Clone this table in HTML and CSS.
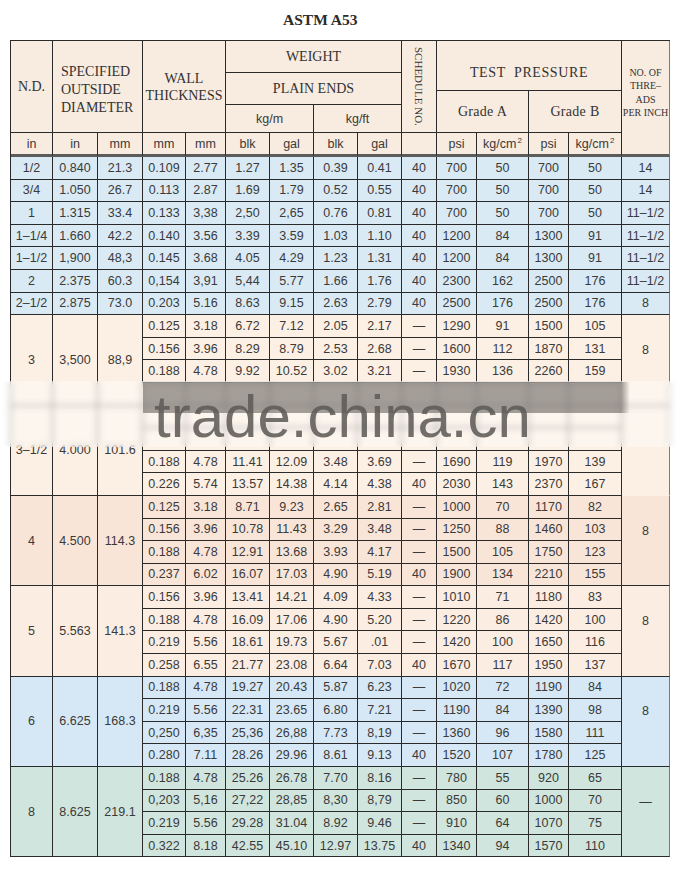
FILE: index.html
```html
<!DOCTYPE html>
<html>
<head>
<meta charset="utf-8">
<link rel="stylesheet" href="styles.css">
</head>
<body>
<div class="page">
  <div class="title">ASTM A53</div>
  <div class="tbl">
    <div class="cell h nd">N.D.</div>
    <div class="cell h sod"><div>SPECIFIED<br>OUTSIDE<br>DIAMETER</div></div>
    <div class="cell h wall"><div>WALL<br>THICKNESS</div></div>
    <div class="cell h wt">WEIGHT</div>
    <div class="cell h pe">PLAIN ENDS</div>
    <div class="cell hs kgm">kg/m</div>
    <div class="cell hs kgf">kg/ft</div>
    <div class="cell h sch"><span class="vert">SCHEDULE NO.</span></div>
    <div class="cell h tp">TEST&nbsp; PRESSURE</div>
    <div class="cell h ga">Grade A</div>
    <div class="cell h gb">Grade B</div>
    <div class="cell h thr"><div>NO. OF<br>THRE–<br>ADS<br>PER INCH</div></div>

    <div class="grp u">
      <div>in</div><div>in</div><div>mm</div><div>mm</div><div>mm</div><div>blk</div><div>gal</div><div>blk</div><div>gal</div><div></div><div>psi</div><div>kg/cm<span class="sup">2</span></div><div>psi</div><div>kg/cm<span class="sup">2</span></div>
    </div>

    <div class="grp b"><div>1/2</div><div>0.840</div><div>21.3</div><div>0.109</div><div>2.77</div><div>1.27</div><div>1.35</div><div>0.39</div><div>0.41</div><div>40</div><div>700</div><div>50</div><div>700</div><div>50</div><div>14</div></div>
    <div class="grp b"><div>3/4</div><div>1.050</div><div>26.7</div><div>0.113</div><div>2.87</div><div>1.69</div><div>1.79</div><div>0.52</div><div>0.55</div><div>40</div><div>700</div><div>50</div><div>700</div><div>50</div><div>14</div></div>
    <div class="grp b"><div>1</div><div>1.315</div><div>33.4</div><div>0.133</div><div>3,38</div><div>2,50</div><div>2,65</div><div>0.76</div><div>0.81</div><div>40</div><div>700</div><div>50</div><div>700</div><div>50</div><div>11–1/2</div></div>
    <div class="grp b"><div>1–1/4</div><div>1.660</div><div>42.2</div><div>0.140</div><div>3.56</div><div>3.39</div><div>3.59</div><div>1.03</div><div>1.10</div><div>40</div><div>1200</div><div>84</div><div>1300</div><div>91</div><div>11–1/2</div></div>
    <div class="grp b"><div>1–1/2</div><div>1,900</div><div>48,3</div><div>0.145</div><div>3.68</div><div>4.05</div><div>4.29</div><div>1.23</div><div>1.31</div><div>40</div><div>1200</div><div>84</div><div>1300</div><div>91</div><div>11–1/2</div></div>
    <div class="grp b"><div>2</div><div>2.375</div><div>60.3</div><div>0,154</div><div>3,91</div><div>5,44</div><div>5.77</div><div>1.66</div><div>1.76</div><div>40</div><div>2300</div><div>162</div><div>2500</div><div>176</div><div>11–1/2</div></div>
    <div class="grp b"><div>2–1/2</div><div>2.875</div><div>73.0</div><div>0.203</div><div>5.16</div><div>8.63</div><div>9.15</div><div>2.63</div><div>2.79</div><div>40</div><div>2500</div><div>176</div><div>2500</div><div>176</div><div>8</div></div>

    <div class="grp p3">
      <div class="sp">3</div><div class="sp">3,500</div><div class="sp">88,9</div>
      <div>0.125</div><div>3.18</div><div>6.72</div><div>7.12</div><div>2.05</div><div>2.17</div><div>—</div><div>1290</div><div>91</div><div>1500</div><div>105</div>
      <div class="sp th">8</div>
      <div>0.156</div><div>3.96</div><div>8.29</div><div>8.79</div><div>2.53</div><div>2.68</div><div>—</div><div>1600</div><div>112</div><div>1870</div><div>131</div>
      <div>0.188</div><div>4.78</div><div>9.92</div><div>10.52</div><div>3.02</div><div>3.21</div><div>—</div><div>1930</div><div>136</div><div>2260</div><div>159</div>
      <div></div><div></div><div></div><div></div><div></div><div></div><div></div><div></div><div></div><div></div><div></div>
    </div>
    <div class="grp p3">
      <div class="sp">3–1/2</div><div class="sp">4.000</div><div class="sp">101.6</div>
      <div></div><div></div><div></div><div></div><div></div><div></div><div></div><div></div><div></div><div></div><div></div>
      <div class="sp th cont"></div>
      <div></div><div></div><div></div><div></div><div></div><div></div><div></div><div></div><div></div><div></div><div></div>
      <div>0.188</div><div>4.78</div><div>11.41</div><div>12.09</div><div>3.48</div><div>3.69</div><div>—</div><div>1690</div><div>119</div><div>1970</div><div>139</div>
      <div>0.226</div><div>5.74</div><div>13.57</div><div>14.38</div><div>4.14</div><div>4.38</div><div>40</div><div>2030</div><div>143</div><div>2370</div><div>167</div>
    </div>
    <div class="grp p4">
      <div class="sp">4</div><div class="sp">4.500</div><div class="sp">114.3</div>
      <div>0.125</div><div>3.18</div><div>8.71</div><div>9.23</div><div>2.65</div><div>2.81</div><div>—</div><div>1000</div><div>70</div><div>1170</div><div>82</div>
      <div class="sp th">8</div>
      <div>0.156</div><div>3.96</div><div>10.78</div><div>11.43</div><div>3.29</div><div>3.48</div><div>—</div><div>1250</div><div>88</div><div>1460</div><div>103</div>
      <div>0.188</div><div>4.78</div><div>12.91</div><div>13.68</div><div>3.93</div><div>4.17</div><div>—</div><div>1500</div><div>105</div><div>1750</div><div>123</div>
      <div>0.237</div><div>6.02</div><div>16.07</div><div>17.03</div><div>4.90</div><div>5.19</div><div>40</div><div>1900</div><div>134</div><div>2210</div><div>155</div>
    </div>
    <div class="grp p5">
      <div class="sp">5</div><div class="sp">5.563</div><div class="sp">141.3</div>
      <div>0.156</div><div>3.96</div><div>13.41</div><div>14.21</div><div>4.09</div><div>4.33</div><div>—</div><div>1010</div><div>71</div><div>1180</div><div>83</div>
      <div class="sp th">8</div>
      <div>0.188</div><div>4.78</div><div>16.09</div><div>17.06</div><div>4.90</div><div>5.20</div><div>—</div><div>1220</div><div>86</div><div>1420</div><div>100</div>
      <div>0.219</div><div>5.56</div><div>18.61</div><div>19.73</div><div>5.67</div><div>.01</div><div>—</div><div>1420</div><div>100</div><div>1650</div><div>116</div>
      <div>0.258</div><div>6.55</div><div>21.77</div><div>23.08</div><div>6.64</div><div>7.03</div><div>40</div><div>1670</div><div>117</div><div>1950</div><div>137</div>
    </div>
    <div class="grp s6">
      <div class="sp">6</div><div class="sp">6.625</div><div class="sp">168.3</div>
      <div>0.188</div><div>4.78</div><div>19.27</div><div>20.43</div><div>5.87</div><div>6.23</div><div>—</div><div>1020</div><div>72</div><div>1190</div><div>84</div>
      <div class="sp th">8</div>
      <div>0.219</div><div>5.56</div><div>22.31</div><div>23.65</div><div>6.80</div><div>7.21</div><div>—</div><div>1190</div><div>84</div><div>1390</div><div>98</div>
      <div>0,250</div><div>6,35</div><div>25,36</div><div>26,88</div><div>7.73</div><div>8,19</div><div>—</div><div>1360</div><div>96</div><div>1580</div><div>111</div>
      <div>0.280</div><div>7.11</div><div>28.26</div><div>29.96</div><div>8.61</div><div>9.13</div><div>40</div><div>1520</div><div>107</div><div>1780</div><div>125</div>
    </div>
    <div class="grp g8">
      <div class="sp">8</div><div class="sp">8.625</div><div class="sp">219.1</div>
      <div>0.188</div><div>4.78</div><div>25.26</div><div>26.78</div><div>7.70</div><div>8.16</div><div>—</div><div>780</div><div>55</div><div>920</div><div>65</div>
      <div class="sp th">—</div>
      <div>0,203</div><div>5,16</div><div>27,22</div><div>28,85</div><div>8,30</div><div>8,79</div><div>—</div><div>850</div><div>60</div><div>1000</div><div>70</div>
      <div>0.219</div><div>5.56</div><div>29.28</div><div>31.04</div><div>8.92</div><div>9.46</div><div>—</div><div>910</div><div>64</div><div>1070</div><div>75</div>
      <div>0.322</div><div>8.18</div><div>42.55</div><div>45.10</div><div>12.97</div><div>13.75</div><div>40</div><div>1340</div><div>94</div><div>1570</div><div>110</div>
    </div>
  </div>

  <div class="wm">
    <div class="wm-blur"></div>
    <div class="wm-dark"></div>
    <span class="wm-text">trade.china.cn</span>
  </div>
</div>
</body>
</html>
```

FILE: styles.css
```css
html, body {
  margin: 0;
  padding: 0;
  background: #ffffff;
}

.page {
  position: relative;
  width: 680px;
  height: 870px;
  overflow: hidden;
}

.title {
  height: 40px;
  box-sizing: border-box;
  padding: 11px 0 0 283px;
  font-family: "Liberation Serif", "Times New Roman", serif;
  font-weight: bold;
  font-size: 15.5px;
  line-height: 18px;
  color: #2b2b2b;
}

.tbl {
  margin-left: 10px;
  width: 660px;
  box-sizing: border-box;
  display: grid;
  grid-template-columns: 42px 45px 45px 43px 40px 44px 44px 44px 44px 35px 40px 52px 40px 53px 48px;
  grid-template-rows: 32px 18px 14px 28px 24px repeat(31, 22.6px);
  border-top: 1px solid #2a2a2a;
  border-left: 1px solid #2a2a2a;
  font-family: "Liberation Sans", Arial, sans-serif;
  font-size: 12.5px;
  color: #3a3a3a;
}

.cell,
.grp > div {
  box-sizing: border-box;
  border-right: 1px solid #2a2a2a;
  border-bottom: 1px solid #2a2a2a;
  display: flex;
  align-items: center;
  justify-content: center;
  text-align: center;
  white-space: nowrap;
}

.grp {
  display: contents;
}

.cell {
  background: #f8ebdf;
}

.h {
  font-family: "Liberation Serif", "Times New Roman", serif;
  font-size: 14px;
  color: #333333;
}

.hs {
  font-size: 12.5px;
}

.nd { grid-column: 1; grid-row: 1 / 5; }
.sod {
  grid-column: 2 / 4;
  grid-row: 1 / 5;
  justify-content: flex-start;
  text-align: left;
  padding: 6px 0 0 8px;
  line-height: 18px;
}
.wall { grid-column: 4 / 6; grid-row: 1 / 5; line-height: 17px; }
.wt { grid-column: 6 / 10; grid-row: 1 / 2; }
.pe { grid-column: 6 / 10; grid-row: 2 / 4; }
.kgm { grid-column: 6 / 8; grid-row: 4 / 5; }
.kgf { grid-column: 8 / 10; grid-row: 4 / 5; }
.sch { grid-column: 10; grid-row: 1 / 5; }
.tp { grid-column: 11 / 15; grid-row: 1 / 3; padding-top: 14px; letter-spacing: 0.6px; }
.ga { grid-column: 11 / 13; grid-row: 3 / 5; letter-spacing: 0.3px; }
.gb { grid-column: 13 / 15; grid-row: 3 / 5; letter-spacing: 0.3px; }
.thr {
  grid-column: 15;
  grid-row: 1 / 6;
  font-size: 10px;
  line-height: 13.5px;
  padding-bottom: 10px;
  border-bottom: 3px solid #5c5c5c !important;
  border-right-color: #7a7a7a !important;
}

.vert {
  writing-mode: vertical-rl;
  font-size: 11px;
  letter-spacing: 0;
}

.sup {
  font-size: 8px;
  position: relative;
  top: -3px;
  margin-left: 1px;
}

.u > div {
  background: #f8ebdf;
  border-bottom: 3px solid #5c5c5c;
}

.b > div { background: #d9eaf5; }
.p3 > div { background: #fcefe3; }
.p4 > div { background: #f9e5d8; }
.p5 > div { background: #fbede2; }
.s6 > div { background: #d6e8f6; }
.g8 > div { background: #d0e5dd; }

.grp > div:nth-child(15),
.grp > .th {
  border-right-color: #7a7a7a;
}

.sp { grid-row: span 4; }

.th {
  padding-bottom: 20px;
}

.grp > .th:not(.cont) {
  border-bottom-color: #2a2a2a;
}

.p3 > .th {
  border-bottom-color: transparent;
}

/* watermark overlay */
.wm {
  position: absolute;
  left: 0;
  top: 381px;
  width: 680px;
  height: 66px;
  pointer-events: none;
}

.wm-blur {
  position: absolute;
  left: 0;
  top: 0;
  width: 680px;
  height: 66px;
  backdrop-filter: blur(3px);
  background: rgba(255, 255, 255, 0.42);
}

.wm-dark {
  position: absolute;
  left: 143px;
  top: 1px;
  width: 487px;
  height: 31px;
  background: linear-gradient(to right, rgba(104, 99, 94, 0.6) 0, rgba(104, 99, 94, 0.6) 478px, rgba(104, 99, 94, 0) 487px);
}

.wm-text {
  position: absolute;
  left: 154px;
  top: 1px;
  font-family: "Liberation Sans", Arial, sans-serif;
  font-size: 60px;
  line-height: 70px;
  color: rgba(95, 91, 88, 0.88);
  white-space: nowrap;
}
```
